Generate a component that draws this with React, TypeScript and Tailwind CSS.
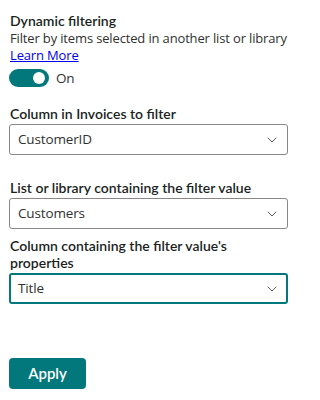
function Chevron() {
  return (
    <svg width="10" height="6" viewBox="0 0 10 6" fill="none" className="text-[#605e5c]">
      <path d="M1 1l4 4 4-4" stroke="currentColor" strokeWidth="1" strokeLinecap="round" strokeLinejoin="round" />
    </svg>
  );
}

function Dropdown({ value, focused }: { value: string; focused?: boolean }) {
  return (
    <div
      className={
        focused
          ? "flex h-[31px] items-center justify-between rounded-[3px] border-2 border-[#03787c] pl-[7px] pr-[9px]"
          : "flex h-[31px] items-center justify-between rounded-[3px] border border-[#8a8886] pl-[8px] pr-[10px]"
      }
    >
      <span className="text-[13.5px] tracking-[-0.15px] text-[#323130]">{value}</span>
      <Chevron />
    </div>
  );
}

function Label({ children }: { children: React.ReactNode }) {
  return (
    <div className="pl-px font-['Lato','Open_Sans',sans-serif] text-[14px] font-semibold leading-[17px] text-[#201f1e]">
      {children}
    </div>
  );
}

export default function App() {
  return (
    <div className="flex h-[400px] w-[296px] flex-col bg-white pl-[9px] pr-[8px] pt-[11px] font-['Open_Sans','Noto_Sans',sans-serif]">
      <div className="pl-px font-['Lato','Open_Sans',sans-serif] text-[14px] font-semibold leading-[19px] text-[#201f1e]">
        Dynamic filtering
      </div>
      <div className="pl-px text-[13px] leading-[17px] tracking-[-0.15px] text-[#323130]">
        Filter by items selected in another list or library
      </div>
      <a href="#" className="self-start pl-px text-[13px] leading-[17px] tracking-[-0.15px] text-[#0000ee] underline">
        Learn More
      </a>
      <div className="mt-[4px] flex h-[20px] items-center gap-[7px]">
        <div className="flex h-[18px] w-[40px] items-center justify-end rounded-full bg-[#03787c] pr-[4px]">
          <div className="h-[12px] w-[12px] rounded-full bg-white" />
        </div>
        <span className="text-[13.5px] tracking-[-0.15px] text-[#323130]">On</span>
      </div>

      <div className="mt-[17px] flex flex-col gap-[2px]">
        <Label>Column in Invoices to filter</Label>
        <Dropdown value="CustomerID" />
      </div>

      <div className="mt-[24px] flex flex-col gap-[2px]">
        <Label>List or library containing the filter value</Label>
        <Dropdown value="Customers" />
      </div>

      <div className="mt-[8px] flex flex-col gap-[2px]">
        <Label>
          Column containing the filter value's
          <br />
          properties
        </Label>
        <Dropdown value="Title" focused />
      </div>

      <button className="mt-[54px] h-[31px] w-[77px] rounded-[4px] bg-[#03787c] font-['Lato','Open_Sans',sans-serif] text-[15px] font-semibold text-white">
        Apply
      </button>
    </div>
  );
}
